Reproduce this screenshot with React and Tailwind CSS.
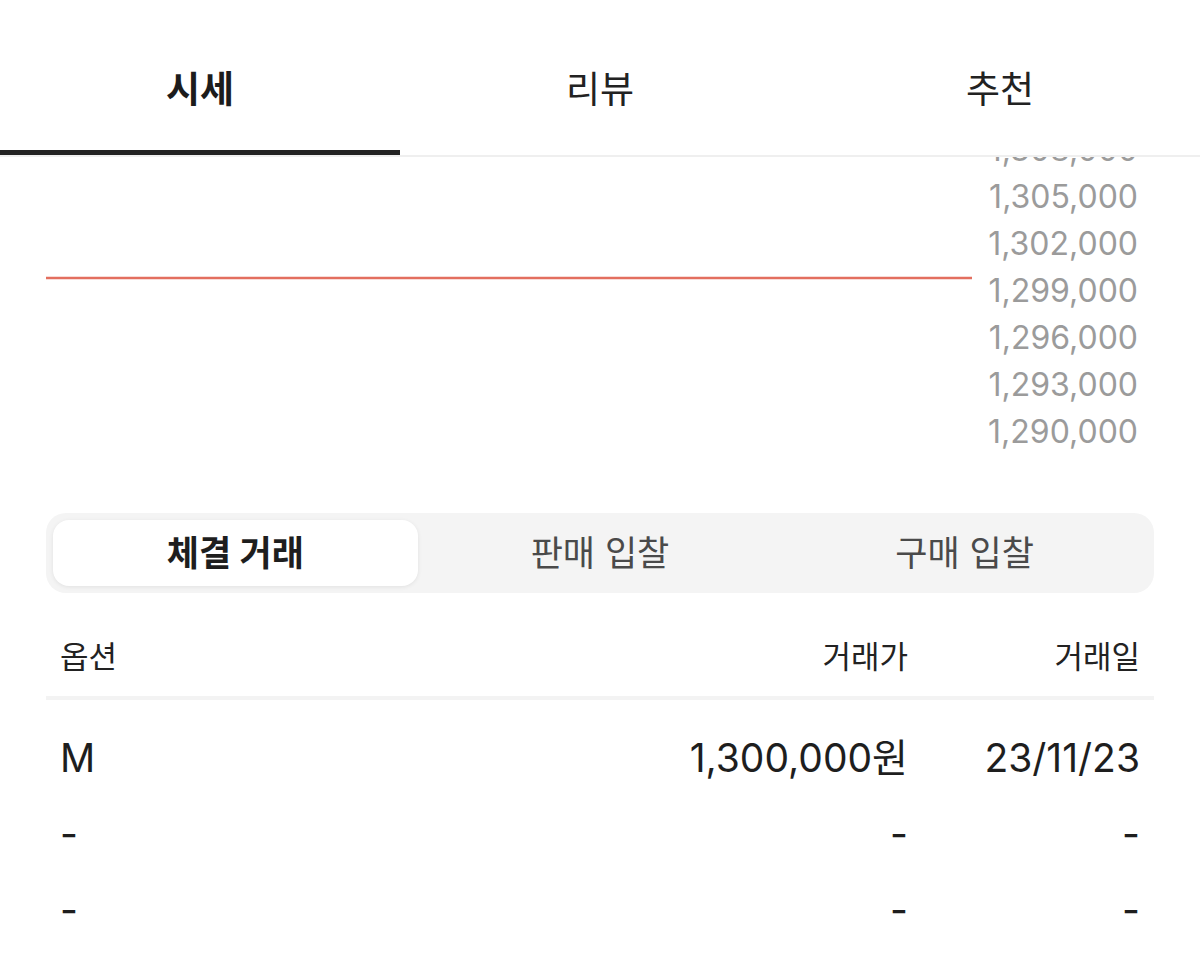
import React, { useState } from "react";

const tabs = ["시세", "리뷰", "추천"];
const segments = ["체결 거래", "판매 입찰", "구매 입찰"];
const axisLabels = [
  "1,308,000",
  "1,305,000",
  "1,302,000",
  "1,299,000",
  "1,296,000",
  "1,293,000",
  "1,290,000",
];
const trades = [
  { option: "M", price: "1,300,000원", date: "23/11/23" },
  { option: "-", price: "-", date: "-" },
  { option: "-", price: "-", date: "-" },
];

export default function App() {
  const [tab, setTab] = useState(0);
  const [segment, setSegment] = useState(0);

  return (
    <div className="w-[1200px] h-[964px] bg-white overflow-hidden font-['Inter','Noto_Sans_CJK_KR',sans-serif] text-[#222]">
      {/* 상단 탭 */}
      <div className="grid grid-cols-3 border-b-2 border-[#efefef]">
        {tabs.map((t, i) => (
          <button
            key={t}
            onClick={() => setTab(i)}
            className={`h-[155px] pt-[30px] flex items-center justify-center text-[37px] border-b-[5px] ${
              tab === i ? "border-[#222] font-bold text-[#1c1c1c]" : "border-transparent text-[#222]"
            }`}
          >
            {t}
          </button>
        ))}
      </div>

      {/* 차트 (위쪽 라벨은 탭 아래로 잘림) */}
      <div className="flex h-[300px] overflow-hidden">
        <div className="pl-[46px] pt-[119px]">
          <svg width="926" height="4" viewBox="0 0 926 4">
            <line x1="0" y1="2" x2="926" y2="2" stroke="#e36f5f" strokeWidth="2.5" />
          </svg>
        </div>
        <div className="ml-auto pr-[62px] -mt-[31px] flex flex-col items-end">
          {axisLabels.map((l) => (
            <div key={l} className="h-[47px] leading-[47px] text-[32px] text-[#9b9b9b]">
              {l}
            </div>
          ))}
        </div>
      </div>

      {/* 세그먼트 */}
      <div className="mx-[46px] mt-[56px] h-[80px] rounded-[20px] bg-[#f4f4f4] p-[7px] grid grid-cols-3">
        {segments.map((s, i) => (
          <button
            key={s}
            onClick={() => setSegment(i)}
            className={`rounded-[16px] flex items-center justify-center text-[35px] ${
              segment === i
                ? "bg-white font-bold text-[#1e1e1e] shadow-[0_1px_4px_rgba(0,0,0,0.08)]"
                : "text-[#4a4a4a]"
            }`}
          >
            {s}
          </button>
        ))}
      </div>

      {/* 테이블 */}
      <div className="mx-[46px] mt-[44px]">
        <div className="flex items-center px-[14px] pb-[19px] border-b-4 border-[#f3f3f3] text-[31px] leading-[40px] text-[#222]">
          <div className="flex-1">옵션</div>
          <div className="text-right">거래가</div>
          <div className="w-[232px] text-right">거래일</div>
        </div>
        <div className="mt-[20px]">
          {trades.map((r, i) => (
            <div key={i} className="h-[76px] flex items-center px-[14px] text-[39px] text-[#1e1e1e]">
              <div className="flex-1">{r.option}</div>
              <div className="text-right">{r.price}</div>
              <div className="w-[232px] text-right">{r.date}</div>
            </div>
          ))}
        </div>
      </div>
    </div>
  );
}
